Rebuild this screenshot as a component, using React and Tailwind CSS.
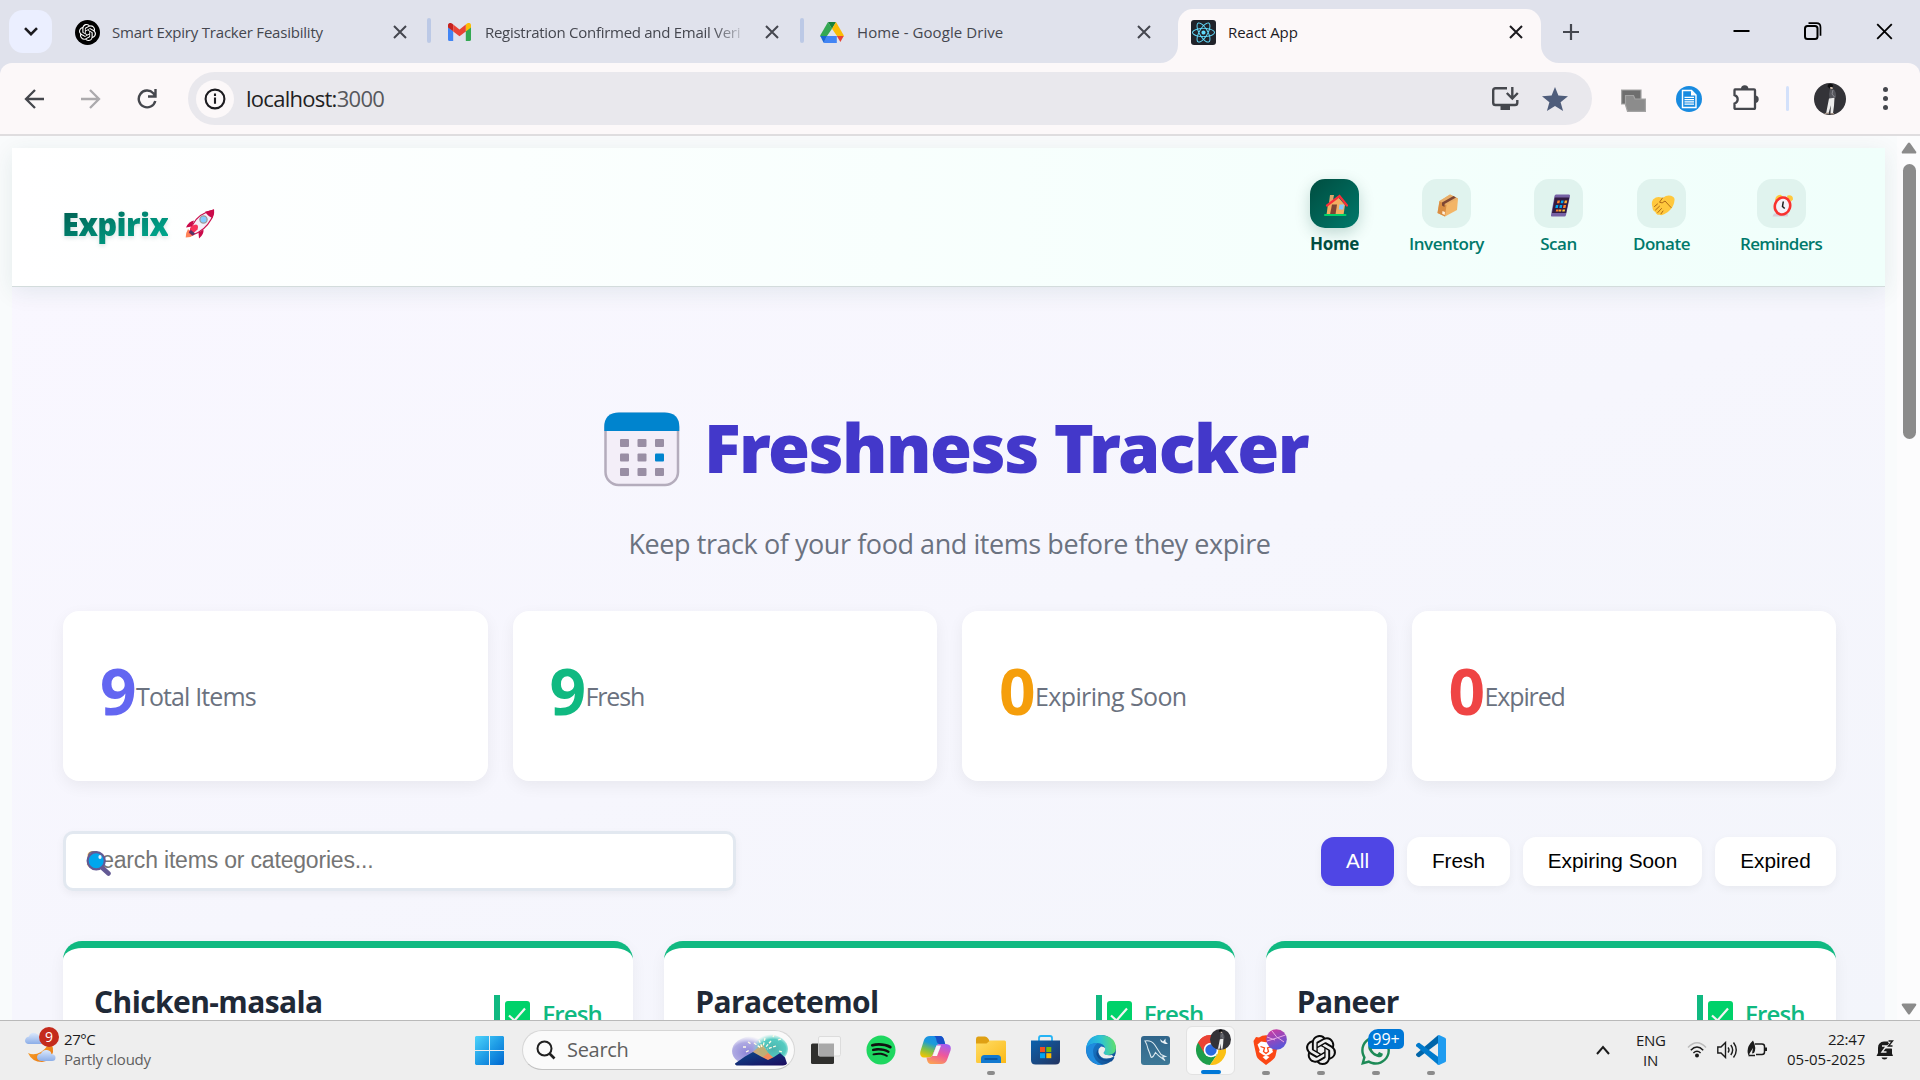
import React from "react";
import { SiOpenai } from "react-icons/si";
import { FaSpotify, FaWhatsapp, FaReact } from "react-icons/fa";

/* ---------- Browser chrome icons ---------- */

const CloseIcon = ({ className = "", size = 14, w = 2 }) => (
  <svg className={className} width={size} height={size} viewBox="0 0 14 14" fill="none" stroke="currentColor" strokeWidth={w}>
    <path d="M1 1l12 12M13 1L1 13" />
  </svg>
);

const GmailIcon = () => (
  <svg width="23" height="18" viewBox="0 0 23 18">
    <path d="M0 2.5V16.5Q0 18 1.6 18H5.2V8.2L0 4z" fill="#4285f4" />
    <path d="M17.8 18h3.6Q23 18 23 16.5V2.5L17.8 8.2z" fill="#34a853" />
    <path d="M0 4.5V2.2C0 0 2.4-.6 4 .5l1.2 1V8.3z" fill="#c5221f" />
    <path d="M17.8 1.5L19 .5c1.7-1.2 4-.4 4 1.7v2.3l-5.2 3.9z" fill="#fbbc04" />
    <path d="M5.2 1.5l6.3 4.9 6.3-4.9v6.9l-6.3 4.9-6.3-4.9z" fill="#ea4335" />
  </svg>
);

const DriveIcon = () => (
  <svg width="24" height="21" viewBox="0 0 24 21">
    <path d="M8 0h8l-4 7z" fill="#188038" />
    <path d="M8 0L.3 13.2Q0 14 .3 14.6L7 14l5-7.300z" fill="#34a853" />
    <path d="M16 0l7.700 13.200q.3.8 0 1.400L17 14l-5-7.300z" fill="#fbbc04" />
    <path d="M7.200 14h9.600v7H4.600q-.9 0-1.400-.8z" fill="#4285f4" />
    <path d="M.3 14h6.900l-3.700 6.600z" fill="#1967d2" />
    <path d="M16.800 14h6.900l-3.300 6z" fill="#ea4335" />
  </svg>
);

const OpenAiCircle = () => (
  <span className="flex size-[25px] items-center justify-center rounded-full bg-black text-white">
    <SiOpenai size={17} />
  </span>
);

const ReactBox = () => (
  <span className="flex size-[25px] items-center justify-center rounded-[3px] bg-[#20232a] text-[#61dafb]">
    <FaReact size={23} />
  </span>
);

const Avatar = ({ size }) => (
  <svg width={size} height={size} viewBox="0 0 32 32">
    <circle cx="16" cy="16" r="16" fill="#333338" />
    <path d="M14 1.500q3-1.500 5 .5l-.5 3-3 .5-2-2z" fill="#0c0c0e" />
    <path d="M16 4l2.500 0 .3 2h-2.300z" fill="#c9b7a8" />
    <path d="M16 6l4 .5q2.500 3 2 8l-6.500 1.500q-1-5 .5-10z" fill="#55565c" />
    <path d="M19 7l-1 4 2.500 3" stroke="#8b8b92" fill="none" />
    <path d="M15 15.500l5.500-.8-.5 8-1 7.500h-2.500l.3-8-2.300 8.500h-2.500z" fill="#ececec" />
    <path d="M11 30l4-.5v1.500l-5 .2zM16.500 30h3.500v1.500h-3.500z" fill="#a08f84" />
  </svg>
);

function Tab({ icon, title, titleClass, className }) {
  return (
    <div className={`flex h-[52px] items-center ${className}`}>
      <span className="flex w-[37px] shrink-0 items-center">{icon}</span>
      <span className={`min-w-0 flex-1 whitespace-nowrap text-[15px] ${titleClass}`}>{title}</span>
    </div>
  );
}

function TabStrip() {
  return (
    <div className="flex h-[63px] w-full items-start bg-[#e0e2ec] text-[#45474f]">
      <div className="ml-[9px] mt-[10px] flex h-[43px] w-[43px] items-center justify-center rounded-[14px] bg-[#ebefff] text-[#1c1b1f]">
        <svg width="14" height="9" viewBox="0 0 14 9" fill="none" stroke="currentColor" strokeWidth="2.600">
          <path d="M1 1.200l6 6 6-6" />
        </svg>
      </div>
      <Tab className="ml-[23px] mt-[6px] w-[318px]" icon={<OpenAiCircle />} title="Smart Expiry Tracker Feasibility" titleClass="tracking-[-0.014em]" />
      <CloseIcon className="mt-[25px]" />
      <div className="ml-[20px] mt-[18px] h-[25px] w-[4px] rounded-full bg-[#bcc9e6]" />
      <Tab
        className="ml-[17px] mt-[6px] w-[298px]"
        icon={<GmailIcon />}
        title="Registration Confirmed and Email Veri"
        titleClass="tracking-[-0.019em] [mask-image:linear-gradient(to_right,black_87%,transparent_101%)]"
      />
      <CloseIcon className="ml-[19px] mt-[25px]" />
      <div className="ml-[21px] mt-[18px] h-[25px] w-[4px] rounded-full bg-[#bcc9e6]" />
      <Tab className="ml-[16px] mt-[6px] w-[317px]" icon={<DriveIcon />} title="Home - Google Drive" titleClass="tracking-[0.005em]" />
      <CloseIcon className="mt-[25px]" />
      <svg className="ml-[9px] mt-[45px] shrink-0" width="18" height="18" viewBox="0 0 18 18">
        <path d="M18 0v18H0A18 18 0 0 0 18 0z" fill="#fcf8f9" />
      </svg>
      <div className="mt-[9px] flex h-[54px] w-[363px] shrink-0 items-start rounded-t-[15px] bg-[#fcf8f9] text-[#1c1b1f]">
        <Tab className="-mt-[3px] ml-[13px] w-[318px]" icon={<ReactBox />} title="React App" titleClass="tracking-[-0.003em]" />
        <CloseIcon className="mt-[16px]" />
      </div>
      <svg className="mt-[45px] shrink-0" width="18" height="18" viewBox="0 0 18 18">
        <path d="M0 0v18h18A18 18 0 0 1 0 0z" fill="#fcf8f9" />
      </svg>
      <svg className="ml-[3px] mt-[23px]" width="18" height="18" viewBox="0 0 18 18" stroke="currentColor" strokeWidth="2.200">
        <path d="M9 1v16M1 9h16" />
      </svg>
      <div className="ml-auto mr-[27px] flex items-center text-black">
        <svg className="mt-[22px]" width="17" height="18" viewBox="0 0 17 18">
          <path d="M.5 9h16" stroke="currentColor" strokeWidth="2" />
        </svg>
        <svg className="ml-[54px] mt-[22px]" width="18" height="18" viewBox="0 0 18 18" fill="none" stroke="currentColor" strokeWidth="2">
          <rect x="1" y="4" width="12.500" height="13" rx="2.500" />
          <path d="M4.500 1.200h8q4 0 4 4v8.500" strokeWidth="1.700" />
        </svg>
        <CloseIcon className="ml-[54px] mt-[22px]" size={17} w={1.500} />
      </div>
    </div>
  );
}

function Toolbar() {
  return (
    <div className="bg-[#e0e2ec]">
      <div className="flex h-[71px] items-center rounded-t-[12px] bg-[#fcf8f9] text-[#45474d]">
        <svg className="ml-[24px]" width="20" height="22" viewBox="0 0 20 22" fill="none" stroke="currentColor" strokeWidth="2.300">
          <path d="M20 11H2M11 2l-9 9 9 9" />
        </svg>
        <svg className="ml-[37px] text-[#acaaad]" width="20" height="22" viewBox="0 0 20 22" fill="none" stroke="currentColor" strokeWidth="2.300">
          <path d="M0 11h18M9 2l9 9-9 9" />
        </svg>
        <svg className="ml-[36px]" width="20" height="22" viewBox="0 0 20 22" fill="none" stroke="currentColor" strokeWidth="2.400">
          <path d="M18.300 13A8.400 8.400 0 1 1 16.300 5.200L18 7.400M18.500 1v7.500H11" />
        </svg>
        <div className="ml-[31px] flex h-[53px] w-[1404px] items-center rounded-full bg-[#e9e8ed]">
          <span className="ml-[8px] flex size-[38px] items-center justify-center rounded-full bg-[#fcf8f9] text-[#1c1b1f]">
            <svg width="22" height="22" viewBox="0 0 22 22" fill="none" stroke="currentColor" strokeWidth="2.100">
              <circle cx="11" cy="11" r="9.400" />
              <path d="M11 9.500v6.300M11 5.600v2.400" />
            </svg>
          </span>
          <span className="ml-[12px] pb-[2px] text-[22px] leading-none tracking-[-0.033em] text-[#1f1f23]">
            localhost:<span className="text-[#56575c]">3000</span>
          </span>
          <svg className="ml-auto" width="27" height="23" viewBox="0 0 27 23" fill="none" stroke="#45474d" strokeWidth="2.400">
            <path d="M15 1.200H3.500Q1.200 1.200 1.200 3.500v12.200q0 2.300 2.300 2.300H23q2.300 0 2.300-2.300V13M20.300 0v11M14.800 6l5.500 5.500L25.800 6" />
            <path d="M8.500 19h9.500v4H8.500z" fill="#45474d" stroke="none" />
          </svg>
          <svg className="ml-[23px] mr-[24px]" width="26" height="24" viewBox="0 0 26 24">
            <path d="M13 0l3.400 8.600 9.600.6-7.400 6 2.500 8.800-8.100-5-8.100 5 2.500-8.800L0 9.200l9.600-.6z" fill="#4f5d7b" />
          </svg>
        </div>
        <svg className="ml-[29px] mt-[3px]" width="25" height="23" viewBox="0 0 25 23" stroke="#a3a3a3" strokeWidth="1.200">
          <path d="M.6 1H20v14H.6z" fill="#6e6e6e" />
          <path d="M4.500 6.500h8l1.500 3.500H24.400v12.400H6.500L4.500 16z" fill="#8c8c8c" />
        </svg>
        <svg className="ml-[30px] mt-px" width="26" height="26" viewBox="0 0 26 26">
          <circle cx="13" cy="13" r="13" fill="#188be0" />
          <path d="M6.500 4.500h9l4.500 4.500v12.500H6.500z" fill="#188be0" stroke="#fff" strokeWidth="1.400" />
          <path d="M15 4.500V9.500h5z" fill="#fff" />
          <path d="M8.500 11.300h9.500M8.500 13.600h9.500M8.500 15.900h9.500M8.500 18.200h9.500" stroke="#fff" strokeWidth="1.300" />
        </svg>
        <svg className="-mt-[4px] ml-[31px]" width="26" height="26" viewBox="0 0 26 26">
          <path d="M2 5.300h19q1 0 1 1V24q0 1-1 1H2.500q-1 0-1-1v-4.500q3.200-1 3.200-4.200t-3.200-4.200V6.300q0-1 .5-1z" fill="none" stroke="#45474d" strokeWidth="2.300" />
          <path d="M8 5a3.700 3.700 0 0 1 7.400 0zM22 11.500a3.700 3.700 0 0 1 0 7.400z" fill="#45474d" />
        </svg>
        <div className="ml-[27px] h-[25px] w-[3px] rounded-full bg-[#d3e1fb]" />
        <span className="ml-[25px]">
          <Avatar size={32} />
        </span>
        <span className="ml-[37px] flex flex-col gap-[4px]">
          <i className="size-[5px] rounded-full bg-[#45474d]" />
          <i className="size-[5px] rounded-full bg-[#45474d]" />
          <i className="size-[5px] rounded-full bg-[#45474d]" />
        </span>
      </div>
      <div className="h-[2px] bg-[#dfdddf]" />
    </div>
  );
}

/* ---------- App pictograms ---------- */

const Rocket = () => (
  <svg width="30" height="30" viewBox="0 0 30 30">
    <path d="M3 20q-2.500 4-2.300 8.500Q6 28.500 8.500 26z" fill="#ff8257" />
    <path d="M9 11.500q-5 .5-8 7l6-1zM18.500 20.500q.5 5-4.500 9l-.5-6z" fill="#ca0b4a" />
    <path d="M4.500 23.500Q9 8 21 3.500l7.500-2.500q.5 5-2.500 9.500Q20 21.500 7.500 26z" fill="#f4eef8" stroke="#ca0b4a" strokeWidth="1.200" />
    <path d="M20 2.800l9-2.300q.3 4.500-1.700 8.300-4-1-7.300-6z" fill="#ca0b4a" />
    <circle cx="18.500" cy="10.500" r="3.600" fill="#83cbff" stroke="#9b9b9b" strokeWidth="1.300" />
    <path d="M5 20q1-4 6-4.500 3 .5 1.500 5L8 24.500z" fill="#f8315a" />
    <path d="M4 23.500l4 3 2-2-4-3.500z" fill="#533566" />
  </svg>
);

const House = () => (
  <svg width="24" height="23" viewBox="0 0 24 23">
    <path d="M6 1h4l-1.500 8H5z" fill="#dea66c" />
    <path d="M4 10l10-7 7 8-1.500 10H2.500z" fill="#f3ad61" />
    <path d="M8 10.500h5l-1.500 10H6z" fill="#7d4533" />
    <path d="M15.500 10.500h4.500l-.8 5h-4.500z" fill="#83cbff" />
    <path d="M3 11.500L15.500 2 23 11.500" fill="none" stroke="#f92f3a" strokeWidth="2.200" strokeLinecap="round" />
    <path d="M1 21h20.500" stroke="#00d26a" strokeWidth="2" strokeLinecap="round" />
  </svg>
);

const Parcel = () => (
  <svg width="22" height="23" viewBox="0 0 22 23">
    <path d="M2.500 7L13 .5 21 4.500 20 16 8 22.500.5 19z" fill="#f3b567" />
    <path d="M2.500 7L9.500 11 8 22.500.5 19z" fill="#d98d43" />
    <path d="M2.500 7L13 .5 21 4.500 9.500 11z" fill="#e8ad68" />
    <path d="M5 8.500L16.500 2l2.500 1.500L7.500 10v3L5 11.500z" fill="#7d4533" />
    <path d="M5.500 17l2.500 1-.3 3-2.500-1.300z" fill="#fff0dc" />
  </svg>
);

const Phone = () => (
  <svg width="21" height="23" viewBox="0 0 21 23">
    <path d="M6 .5h13q1.300 0 1 1.500l-4 19q-.4 1.500-1.600 1.500H2Q.6 22.500 1 21L4.500 2Q4.800.500 6 .500z" fill="#7661a5" />
    <path d="M4.800 3.500h14.500l-3.200 15.500H2z" fill="#321b41" />
    <path d="M7.500 6.500H10l-.6 2.800H6.900zM6.200 15.500h2.500l-.4 2H5.700z" fill="#ff822d" />
    <path d="M11.200 6.500h2.500l-.6 2.800h-2.500zM9.800 11h2.500l-.5 3H9.300zM5.900 11h2.500l-.6 3H5.300z" fill="#00a6ed" />
    <path d="M14.800 6.500h2.500l-.6 2.800h-2.500zM9 15.500h2.500l-.4 2H8.600z" fill="#ffb02e" />
    <path d="M13.600 11h2.500l-.6 3h-2.500z" fill="#ff822d" />
    <path d="M12.600 15.500h2.500l-.4 2h-2.500z" fill="#ffc83d" />
  </svg>
);

const Handshake = () => (
  <svg width="24" height="21" viewBox="0 0 24 21">
    <path d="M2 4.500Q5.500 1.500 9 2.200l3 .6Q16 -.5 20 .8q4 1.200 3.500 4.500Q23 11 19.500 14.500 16.500 18 13.500 19q-2.500 1.800-5 .8Q5 20 4.500 17 1.200 15.500 1.500 12 0 8 2 4.500z" fill="#ffc83d" />
    <path d="M11.500 3L8.500 7.200q2.500 2 5.500-1.200l6 6.500M3.500 11.500l3-2.500M4.500 15l4-3.800M6.800 17.500l3.700-4M10 18.800l2-2.800" fill="none" stroke="#b06a16" strokeWidth="1" strokeLinecap="round" />
  </svg>
);

const AlarmClock = () => (
  <svg width="24" height="23" viewBox="0 0 24 23">
    <path d="M3 19.500h14.500l-1 3H1.500z" fill="#d5d0d9" />
    <path d="M4 6Q5 1 9.500.8L12 2.500 6 7.500zM16.500 1.500q5.500-1 5.500 4L20 7.500 16 3z" fill="#ffc83d" />
    <ellipse cx="11.500" cy="12" rx="7.600" ry="8.600" fill="#f4f0f8" stroke="#f8312f" strokeWidth="2.600" transform="rotate(18 11.500 12)" />
    <path d="M12.300 7.500l-.8 5 2.200 2" fill="none" stroke="#1c1c1c" strokeWidth="1.500" />
  </svg>
);

const Calendar = () => (
  <svg width="76" height="75" viewBox="0 0 76 75">
    <rect x="1.500" y="2" width="72.500" height="71" rx="13" fill="#f3eef8" stroke="#b4acbc" strokeWidth="2.500" />
    <path d="M.3 19V15Q.3.500 15 .500h45.500Q75.300.500 75.300 15v4z" fill="#0084ce" />
    <g fill="#998ea4">
      <rect x="16" y="27" width="9" height="8" rx="1" />
      <rect x="33.500" y="27" width="9" height="8" rx="1" />
      <rect x="51" y="27" width="9" height="8" rx="1" />
      <rect x="16" y="41.500" width="9" height="8" rx="1" />
      <rect x="33.500" y="41.500" width="9" height="8" rx="1" />
      <rect x="16" y="56" width="9" height="8" rx="1" />
      <rect x="33.500" y="56" width="9" height="8" rx="1" />
      <rect x="51" y="56" width="9" height="8" rx="1" />
    </g>
    <rect x="51" y="41.500" width="9" height="8" rx="1" fill="#0084ce" />
  </svg>
);

const Magnifier = () => (
  <svg width="26" height="25" viewBox="0 0 26 25">
    <path d="M16.500 17l6 5.500" stroke="#635994" strokeWidth="4.500" strokeLinecap="round" />
    <circle cx="10.200" cy="9.800" r="8.600" fill="#00a6ed" stroke="#635994" strokeWidth="2.200" />
    <ellipse cx="14" cy="6" rx="1.600" ry="2" fill="#e8f6ff" />
  </svg>
);

/* ---------- App page ---------- */

const nav = [
  { label: "Home", icon: <House />, active: true, w: "w-[49px]", t: "tracking-[-0.02em]" },
  { label: "Inventory", icon: <Parcel />, w: "w-[75px]", t: "tracking-[-0.029em]" },
  { label: "Scan", icon: <Phone />, w: "w-[49px]", t: "tracking-[-0.03em]" },
  { label: "Donate", icon: <Handshake />, w: "w-[57px]", t: "tracking-[-0.03em]" },
  { label: "Reminders", icon: <AlarmClock />, w: "w-[82px]", t: "tracking-[-0.042em]" },
];

function AppHeader() {
  return (
    <header className="relative mr-[12px] flex h-[139px] items-start justify-between border-b border-[#d3dcdc] bg-gradient-to-r from-white to-[#f0fffb] shadow-[0_5px_22px_rgba(0,77,64,0.09)]">
      <div className="ml-[50px] mt-[54px] flex items-center">
        <span className="bg-gradient-to-br from-[#00594c] to-[#00b397] bg-clip-text font-['Noto_Sans'] text-[31px] font-black leading-[44px] tracking-[-0.02em] text-transparent drop-shadow-[0_2px_2px_rgba(0,77,64,0.15)]">
          Expirix
        </span>
        <span className="ml-[17px]">
          <Rocket />
        </span>
      </div>
      <nav className="mr-[63px] mt-[31px] flex gap-[50px]">
        {nav.map((n) => (
          <div key={n.label} className={`flex flex-col items-center ${n.w}`}>
            <span
              className={
                n.active
                  ? "flex size-[49px] items-center justify-center rounded-[15px] bg-gradient-to-br from-[#004d40] to-[#00796b] pl-[3px] pt-[3px] shadow-[0_5px_15px_rgba(0,77,64,0.22)]"
                  : "flex size-[49px] items-center justify-center rounded-[15px] bg-[#e0f3ee] pl-[3px] pt-[3px]"
              }
            >
              {n.icon}
            </span>
            <span
              className={`mt-[4px] whitespace-nowrap text-[17px] leading-[24px] ${n.t} ${
                n.active ? "font-bold text-[#004d40]" : "font-semibold text-[#00796b]"
              }`}
            >
              {n.label}
            </span>
          </div>
        ))}
      </nav>
    </header>
  );
}

const stats = [
  { n: 9, label: "Total Items", color: "text-[#6366f1]", t: "tracking-[-0.035em]" },
  { n: 9, label: "Fresh", color: "text-[#10b981]", t: "tracking-[-0.045em]" },
  { n: 0, label: "Expiring Soon", color: "text-[#f59e0b]", t: "tracking-[-0.025em]" },
  { n: 0, label: "Expired", color: "text-[#ef4444]", t: "tracking-[-0.045em]" },
];

const filters = [
  { label: "All", w: "w-[73px]" },
  { label: "Fresh", w: "w-[103px]" },
  { label: "Expiring Soon", w: "w-[179px]" },
  { label: "Expired", w: "w-[121px]" },
];

const items = ["Chicken-masala", "Paracetemol", "Paneer"];

function Page() {
  return (
    <div className="flex h-[884px] overflow-hidden bg-[#f9fbfc] pl-[12px]">
      <div className="w-[1885px] shrink-0 pt-[12px]">
        <AppHeader />
        <main className="mr-[12px] h-[740px] bg-gradient-to-br from-[#f9f7ff] via-[#f6f6fd] to-[#f3f5fb] pl-[51px] pr-[49px]">
          <div className="flex justify-center pt-[125px]">
            <span className="ml-[13px] mr-[24px] shrink-0">
              <Calendar />
            </span>
            <h1 className="-mt-[13px] whitespace-nowrap font-['Noto_Sans'] text-[68px] font-black leading-[96px] tracking-[-0.023em] text-[#4338ca]">
              Freshness Tracker
            </h1>
          </div>
          <p className="mt-[30px] whitespace-nowrap text-center text-[27px] leading-[38px] tracking-[-0.016em] text-[#6b7280]">
            Keep track of your food and items before they expire
          </p>
          <div className="mt-[48px] grid grid-cols-4 gap-[25px]">
            {stats.map((s) => (
              <div key={s.label} className="flex h-[170px] items-start rounded-[16px] bg-white pl-[37px] pt-[32px] shadow-[0_5px_16px_rgba(0,0,0,0.06)]">
                <span className={`w-[36px] text-[64px] font-bold leading-[96px] tracking-[-0.04em] ${s.color}`}>{s.n}</span>
                <span className={`mt-[36px] whitespace-nowrap text-[25px] leading-[34px] text-[#6b7280] ${s.t}`}>{s.label}</span>
              </div>
            ))}
          </div>
          <div className="mt-[50px] flex items-center justify-between">
            <div className="relative flex h-[60px] w-[673px] items-center rounded-[10px] border-[3px] border-[#e2e8f0] bg-white pl-[20px] font-['Liberation_Sans'] text-[23px] text-[#757575] shadow-[0_3px_8px_rgba(0,0,0,0.05)]">
              <span className="whitespace-nowrap pb-px tracking-[-0.008em]">Search items or categories...</span>
              <span className="absolute left-[20px] top-[17px]">
                <Magnifier />
              </span>
            </div>
            <div className="flex gap-[13px] font-['Liberation_Sans'] text-[20.8px]">
              {filters.map((f, i) => (
                <span
                  key={f.label}
                  className={`flex h-[49px] items-center justify-center whitespace-nowrap rounded-[13px] shadow-[0_3px_8px_rgba(0,0,0,0.05)] ${f.w} ${
                    i === 0 ? "bg-[#4f46e5] text-white" : "bg-white text-black"
                  }`}
                >
                  {f.label}
                </span>
              ))}
            </div>
          </div>
          <div className="mt-[50px] grid grid-cols-3 gap-[31px]">
            {items.map((t) => (
              <div key={t} className="flex h-[260px] items-start justify-between rounded-[19px] border-t-[7px] border-[#10b981] bg-white pl-[31px] pr-[31px] shadow-[0_5px_16px_rgba(0,0,0,0.05)]">
                <h2 className="mt-[33px] whitespace-nowrap text-[30px] font-bold leading-[42px] tracking-[-0.02em] text-[#1f2937]">{t}</h2>
                <span className="mt-[47px] flex h-[54px] w-[108px] items-start border-l-[6px] border-[#10b981] pl-[5px] text-[24px] font-semibold leading-[38px] tracking-[-0.035em] text-[#10b981]">
                  <svg className="mt-[6px] shrink-0" width="25" height="25" viewBox="0 0 25 25">
                    <rect width="25" height="25" rx="3" fill="#00d26a" />
                    <path d="M4 14.500l5.500 5L20 7.500" fill="none" stroke="#f3f3f3" strokeWidth="2.200" />
                  </svg>
                  <span className="ml-[12px]">Fresh</span>
                </span>
              </div>
            ))}
          </div>
        </main>
      </div>
      <div className="flex w-[23px] flex-col items-center bg-[#fcfcfd] pl-px pt-[6px]">
        <svg width="16" height="12" viewBox="0 0 16 12">
          <path d="M7 1q1-1 2 0l6 8.500q1 2-1 2H2q-2 0-1-2z" fill="#8b8b8b" />
        </svg>
        <div className="mt-[10px] h-[275px] w-[13px] rounded-full bg-[#8b8b8b]" />
        <svg className="mt-[564px]" width="16" height="12" viewBox="0 0 16 12">
          <path d="M7 11q1 1 2 0l6-8.500q1-2-1-2H2q-2 0-1 2z" fill="#8b8b8b" />
        </svg>
      </div>
    </div>
  );
}

/* ---------- Taskbar ---------- */

const Weather = () => (
  <svg width="32" height="36" viewBox="0 0 32 36">
    <defs>
      <linearGradient id="cl" x1="0" y1="0" x2="0" y2="1">
        <stop offset="0" stopColor="#dbe8fb" />
        <stop offset="1" stopColor="#8caee8" />
      </linearGradient>
      <linearGradient id="mn" x1="0" y1="0" x2="1" y2="1">
        <stop offset="0" stopColor="#f9ab35" />
        <stop offset="1" stopColor="#e8710a" />
      </linearGradient>
    </defs>
    <path d="M3 24q6 3 13-1 8-5 6-11 7 3 6 11-2 9-11 10Q7 33 3 24z" fill="url(#mn)" />
    <path d="M3 15q-3-1-3-3.500Q.5 8 4 7.500 5.500 3 10 4q4 1 4.500 4.500L17 15z" fill="url(#cl)" />
    <path d="M16 32q-4-.5-4-4 .5-3.500 4-3.500 1.500-4 6-3.500 4 .5 4.500 4 4 .5 4 3.700T27 32z" fill="url(#cl)" />
  </svg>
);

const Windows = () => (
  <svg width="29" height="29" viewBox="0 0 29 29">
    <defs>
      <linearGradient id="wn" x1="0" y1="0" x2="1" y2="1">
        <stop offset="0" stopColor="#4ed4fb" />
        <stop offset=".5" stopColor="#1f9de6" />
        <stop offset="1" stopColor="#0067d0" />
      </linearGradient>
    </defs>
    <path d="M1 0h13v14H0V1zM15 0h13l1 1v13H15zM0 15h14v14H1l-1-1zM15 15h14v13l-1 1H15z" fill="url(#wn)" />
  </svg>
);

const Fireworks = () => (
  <svg width="56" height="32" viewBox="0 0 56 32">
    <defs>
      <radialGradient id="fa" cx=".35" cy=".55" r=".55">
        <stop offset="0" stopColor="#8d86d8" />
        <stop offset=".6" stopColor="#9b95dc" stopOpacity=".8" />
        <stop offset="1" stopColor="#b9b3ec" stopOpacity="0" />
      </radialGradient>
      <radialGradient id="fb" cx=".62" cy=".5" r=".5">
        <stop offset="0" stopColor="#4cb2ac" />
        <stop offset=".65" stopColor="#43c6bb" stopOpacity=".9" />
        <stop offset="1" stopColor="#7fe0d4" stopOpacity="0" />
      </radialGradient>
      <linearGradient id="fc" x1="0" y1="0" x2="1" y2="1">
        <stop offset="0" stopColor="#0b4a8b" />
        <stop offset="1" stopColor="#1c0b5e" />
      </linearGradient>
    </defs>
    <ellipse cx="21" cy="17" rx="21" ry="15" fill="url(#fa)" />
    <ellipse cx="36" cy="15" rx="20" ry="15" fill="url(#fb)" />
    <path d="M14 24l16-14 10 14-5 3z" fill="#d9a964" opacity=".8" />
    <path d="M30 24l6-5 6 5-5 3z" fill="#f58a5a" />
    <path d="M3 29.500l10-7 8-4.500 8 4.500 7 3.500 6-3 6-4 5 4.500 2 6q-1 2-4 2H6q-3 0-3-2z" fill="url(#fc)" />
    <path d="M27 6l3 7M33 4l-2 9M39 7l-6 7M22 9l7 5M44 12l-9 3M16 8l3 2M11 13h3M14 18l4-2M46 6l3-1M47 17l3 1M41 3l1-2" stroke="#fffbe6" strokeWidth="1.300" strokeDasharray="3 1.500" />
  </svg>
);

const TaskView = () => (
  <svg width="30" height="28" viewBox="0 0 30 28">
    <rect x="0" y="7.500" width="23" height="20.500" rx="1.500" fill="#2f2f2d" />
    <rect x="7.500" y=".5" width="22" height="19.500" rx="1.500" fill="#f6f6f6" stroke="#dcdcdc" />
    <path d="M7.500 7.500H23V20H8.500q-1 0-1-1z" fill="#a9a9a9" />
  </svg>
);

const Copilot = () => (
  <svg width="31" height="28" viewBox="0 0 31 28">
    <defs>
      <linearGradient id="ca" x1=".6" y1="0" x2=".2" y2="1">
        <stop offset="0" stopColor="#1a8fe8" />
        <stop offset=".35" stopColor="#1b9bd8" />
        <stop offset=".65" stopColor="#7cc04b" />
        <stop offset="1" stopColor="#f5c400" />
      </linearGradient>
      <linearGradient id="cb" x1=".7" y1="0" x2=".3" y2="1">
        <stop offset="0" stopColor="#a55cf0" />
        <stop offset=".5" stopColor="#f0589a" />
        <stop offset="1" stopColor="#fba055" />
      </linearGradient>
    </defs>
    <path d="M10 0h10q3 0 4 4l1.200 4h-5.500q-3 0-4 3.500L13 18q-1 3.500-4 3.500H4Q-1 21 .5 15L4 4Q5.500 0 10 0z" fill="url(#ca)" />
    <path d="M14 0h6q3 0 4 4l1.200 4H20q-3 0-3.500-3.500Q16 .5 14 0z" fill="#1850c8" />
    <path d="M21 28H11q-3 0-4-4l-.5-2.500H9q3 0 4-3.500l2.700-6.500Q16.700 8 19.700 8H26q6 .5 4.500 6.500L27 24q-1.500 4-6 4z" fill="url(#cb)" />
    <path d="M16.500 9.500h4.500L17 20h-4.500z" fill="#f7f7f7" />
  </svg>
);

const Folder = () => (
  <svg width="30" height="28" viewBox="0 0 30 28">
    <defs>
      <linearGradient id="fo" x1="0" y1="0" x2="1" y2="1">
        <stop offset="0" stopColor="#ffdd66" />
        <stop offset="1" stopColor="#fbb917" />
      </linearGradient>
    </defs>
    <path d="M0 3q0-2.500 2-2.500h7q2 0 3.500 2.500l1 2H28v6H0z" fill="#dfa013" />
    <path d="M0 7.500h10.500L14 4.500h14.500q1.500 0 1.500 1.500v21H1.500Q0 27 0 25.500z" fill="url(#fo)" />
    <path d="M5 27v-4.500q0-3.500 3.500-3.500h13q3.500 0 3.500 3.500V27z" fill="#1279cf" />
    <path d="M8.500 23h13" stroke="#0a4e94" strokeWidth="1.500" />
  </svg>
);

const Store = () => (
  <svg width="29" height="30" viewBox="0 0 29 30">
    <defs>
      <linearGradient id="st" x1="0" y1="0" x2="1" y2="1">
        <stop offset="0" stopColor="#0c62ae" />
        <stop offset="1" stopColor="#233460" />
      </linearGradient>
    </defs>
    <path d="M8 7V3q0-2 2-2h9q2 0 2 2v4" fill="none" stroke="#25b4f5" strokeWidth="1.800" />
    <path d="M0 5.500h29V25q0 4.500-4.500 4.500h-20Q0 29.500 0 25z" fill="url(#st)" />
    <path d="M9 12h5v5H9z" fill="#f25022" />
    <path d="M15.300 12h5v5h-5z" fill="#7fba00" />
    <path d="M9 18.200h5v5H9z" fill="#00a4ef" />
    <path d="M15.300 18.200h5v5h-5z" fill="#ffb900" />
  </svg>
);

const Edge = () => (
  <svg width="30" height="30" viewBox="0 0 30 30">
    <defs>
      <linearGradient id="ea" x1="0" y1=".5" x2="1" y2=".4">
        <stop offset="0" stopColor="#1f9fe8" />
        <stop offset=".5" stopColor="#2cc3d4" />
        <stop offset="1" stopColor="#62e06a" />
      </linearGradient>
      <linearGradient id="eb" x1="0" y1="0" x2="1" y2="1">
        <stop offset="0" stopColor="#1887de" />
        <stop offset="1" stopColor="#114a8b" />
      </linearGradient>
    </defs>
    <circle cx="15" cy="15" r="15" fill="url(#eb)" />
    <path d="M0 14Q1.500 0 15 0q14 1 15 12.500 0 7-7.500 7.500-4.500 0-5-2 2-2 1.500-5-1-4.500-7.500-5Q3 8 0 14z" fill="url(#ea)" />
    <path d="M0 14Q3 8 11.500 8q-4 3-4.500 8Q7 26 17 30q-3 .3-6-.6Q1 26 0 14z" fill="#1f8bde" />
    <path d="M12.500 14q-2 8 6 10.500 5 1 10-2-1 2-3 4Q13 27 10.500 20q-.5-4 2-6z" fill="#0f4c92" />
    <path d="M17.500 18q2-2 1.500-5-1-1.500-4-1.500-3 2-2.500 6 1.500 6 8 6 4 0 8.500-2.500l1-1.500q0-1 1 0V30l-1-7.500q-3-.5-4-2.500-7 1-8.500-2z" fill="#ededed" />
  </svg>
);

const MySql = () => (
  <svg width="29" height="29" viewBox="0 0 29 29">
    <defs>
      <linearGradient id="my" x1="0" y1="0" x2="0" y2="1">
        <stop offset="0" stopColor="#30658a" />
        <stop offset="1" stopColor="#3d7897" />
      </linearGradient>
    </defs>
    <rect width="29" height="29" rx="3" fill="url(#my)" />
    <path d="M4 5q6-1 9.500 3.500Q17 14 20 18.500l4.500 2-3 .5 2.500 3.500-4-3q-3-2-5.500-5l-2 3.500q-2 2-2.500 1-1-3.500-3-8Q6 8 4 5z" fill="none" stroke="#dbe8ef" strokeWidth="1.100" />
    <path d="M19 3l3 2.500 2.500-3v3L27 8h-3l-4-2z" fill="#e6eef3" />
  </svg>
);

const Chrome = () => (
  <svg width="30" height="30" viewBox="0 0 30 30">
    <path d="M15 15L2 7.500A15 15 0 0 1 28 7.500z" fill="#ea4335" />
    <path d="M15 15L2 7.500A15 15 0 0 0 14 30l7.500-11z" fill="#1e9e4a" />
    <path d="M15 15L28 7.500A15 15 0 0 1 14 30l7.500-11V8z" fill="#fbc116" />
    <path d="M15 7.500H28A15 15 0 0 0 2 7.500L8.500 18.500z" fill="#ea4335" />
    <circle cx="15" cy="15" r="7.300" fill="#fff" />
    <circle cx="15" cy="15" r="5.700" fill="#2c6be0" />
  </svg>
);

const Brave = () => (
  <svg width="26" height="30" viewBox="0 0 26 30">
    <path d="M6 2.500Q9 .3 13 .3t7 2.200l3-.5L25.500 6 25 9.500 22.500 21q-.7 2.500-3 4L13 30l-6.500-5q-2.300-1.500-3-4L1 9.500.5 6 3 2z" fill="#fb4715" />
    <path d="M4.500 9.500L8 6.500l5 .8 5-.8 3.500 3-2.200 5.500.7 2-4 2.700-3 1.300-3-1.300L6 17l.7-2z" fill="#fff" />
    <path d="M7.500 11.500l4 1.500-1 3.500 2.500 2 2.500-2-1-3.500 4-1.500" fill="none" stroke="#fb4715" strokeWidth="1.300" />
    <path d="M9.500 22l3.500-1.500 3.500 1.500-3.500 3z" fill="#fff" />
  </svg>
);

const VsCode = () => (
  <svg width="30" height="30" viewBox="0 0 30 30">
    <path d="M22 .3v8L3.200 22.200 1.800 22 0 20.200q-.4-.7.3-1.400z" fill="#0065a9" />
    <path d="M22 29.700v-8L3.200 7.800 1.800 8 0 9.800q-.4.700.3 1.400z" fill="#007acc" />
    <path d="M22 .2q.8-.4 1.600 0L29 2.800q1 .5 1 1.500v21.400q0 1-1 1.500l-5.400 2.600q-.8.400-1.600 0-1-.4 0-1.600z" fill="#1f9cf0" />
  </svg>
);

const apps = [
  { id: "view", icon: <TaskView /> },
  { id: "spotify", icon: <span className="flex size-[30px] items-center justify-center rounded-full bg-[radial-gradient(circle,#111_60%,transparent_61%)]"><FaSpotify size={30} color="#1ed760" /></span> },
  { id: "copilot", icon: <Copilot /> },
  { id: "files", icon: <Folder />, dot: true },
  { id: "store", icon: <Store /> },
  { id: "edge", icon: <Edge /> },
  { id: "mysql", icon: <MySql /> },
  {
    id: "chrome",
    icon: <Chrome />,
    active: true,
    over: <span className="absolute left-[23px] top-[2px]"><Avatar size={21} /></span>,
  },
  {
    id: "brave",
    icon: <Brave />,
    dot: true,
    over: (
      <svg className="absolute left-[25px] top-[3px]" width="21" height="21" viewBox="0 0 21 21">
        <defs>
          <linearGradient id="bv" x1="0" y1="0" x2=".4" y2="1">
            <stop offset="0" stopColor="#d8399b" />
            <stop offset="1" stopColor="#5b55d8" />
          </linearGradient>
        </defs>
        <circle cx="10.500" cy="10.500" r="10.300" fill="url(#bv)" />
        <path d="M1 12Q11 9 19.500 6M6 2q3 6 12 11M1 8l8 3" stroke="#e9a9e4" fill="none" />
      </svg>
    ),
  },
  { id: "gpt", icon: <SiOpenai size={30} color="#0b0b0b" />, dot: true },
  {
    id: "whatsapp",
    icon: <FaWhatsapp size={33} color="#1d8a56" />,
    dot: true,
    over: (
      <span className="absolute left-[17px] top-[3px] flex h-[20px] w-[36px] items-center justify-center rounded-[5px] rounded-tl-[10px] bg-[#0078d7] text-[16px] leading-none text-white">
        99+
      </span>
    ),
  },
  { id: "code", icon: <VsCode />, dot: true },
];

function Taskbar() {
  return (
    <div className="flex h-[60px] items-start border-t border-[#b9b9b9] bg-[#eeeeee] text-[#1b1b1b]">
      <div className="relative ml-[25px] mt-[8px] w-[39px]">
        <Weather />
        <span className="absolute left-[14px] -top-[2px] flex size-[20px] items-center justify-center rounded-full bg-[#c42b1c] text-[14px] leading-none text-white">9</span>
      </div>
      <div className="mt-[8px] w-[411px] whitespace-nowrap text-[15px] leading-[20px]">
        <div className="tracking-[-0.03em]">27°C</div>
        <div className="tracking-[-0.016em] text-[#5f5f5f]">Partly cloudy</div>
      </div>
      <span className="mt-[15px]">
        <Windows />
      </span>
      <div className="ml-[18px] mt-[9px] flex h-[40px] w-[273px] items-center rounded-full border border-[#d6d6d6] border-b-[#c2c2c2] bg-[#fafafa]">
        <svg className="ml-[13px]" width="20" height="20" viewBox="0 0 20 20" fill="none" stroke="#1f1f1f" strokeWidth="2">
          <circle cx="8.500" cy="8.500" r="7" />
          <path d="M13.500 13.500l5 5" strokeWidth="2.600" />
        </svg>
        <span className="ml-[11px] text-[20px] leading-none tracking-[-0.015em] text-[#5f5f5f]">Search</span>
        <span className="ml-auto mr-[6px]">
          <Fireworks />
        </span>
      </div>
      <div className="ml-[3px] mt-[5px] flex">
        {apps.map((a) => (
          <div key={a.id} className="flex w-[55px] justify-center">
            <div className={`relative flex h-[49px] w-[49px] items-center justify-center pb-px ${a.active ? "rounded-[6px] border border-[#e2e2e2] bg-[#f9f9f9]" : ""}`}>
              {a.icon}
              {a.over}
              {a.active && <i className="absolute bottom-0 left-[14px] h-[4px] w-[20px] rounded-full bg-[#0078d7]" />}
              {a.dot && <i className="absolute bottom-0 left-[21px] h-[4px] w-[8px] rounded-full bg-[#8b8b8b]" />}
            </div>
          </div>
        ))}
      </div>
      <div className="ml-auto mr-[26px] flex items-start text-[15px]">
        <svg className="mt-[24px]" width="14" height="10" viewBox="0 0 14 10" fill="none" stroke="currentColor" strokeWidth="2">
          <path d="M1 9l6-7 6 7" />
        </svg>
        <div className="ml-[26px] mt-[9px] w-[29px] text-center leading-[20px] tracking-[-0.02em]">
          <div>ENG</div>
          <div>IN</div>
        </div>
        <svg className="ml-[22px] mt-[20px]" width="20" height="17" viewBox="0 0 20 17" fill="none" strokeWidth="1.500">
          <path d="M1 6.500q9-9.500 18 0" stroke="#bcbcbc" />
          <path d="M3.800 9.300q6.200-6.400 12.400 0M6.400 12q3.600-3.400 7.200 0" stroke="currentColor" />
          <circle cx="10" cy="14.500" r="2" fill="currentColor" />
        </svg>
        <svg className="ml-[10px] mt-[20px]" width="21" height="18" viewBox="0 0 21 18" fill="none" stroke="currentColor" strokeWidth="1.400">
          <path d="M.8 6v6H4l4.500 4.500v-15L4 6z" />
          <path d="M11 6.500q2 2.500 0 5M13.800 4q3.700 5 0 10M16.500 1.500q5.500 7.500 0 15" />
        </svg>
        <svg className="ml-[9px] mt-[19px]" width="20" height="18" viewBox="0 0 20 18">
          <path d="M8 4h7q2.500 0 2.500 2.500V12q0 2.500-2.500 2.500H9" fill="none" stroke="#1b1b1b" strokeWidth="1.500" />
          <path d="M18 7.500h2v3.500h-2z" fill="#1b1b1b" />
          <path d="M1 14Q-1 7 6 .5q4 7 1 12.500l-2 .5L6 8l-3.500 5.500L2 17z" fill="#1b1b1b" />
          <path d="M2 15.500h6" stroke="#1b1b1b" strokeWidth="1.500" />
        </svg>
        <div className="ml-[20px] mt-[8px] w-[78px] whitespace-nowrap text-right leading-[20px]">
          <div className="tracking-[-0.015em]">22:47</div>
          <div>05-05-2025</div>
        </div>
        <svg className="ml-[11px] mt-[19px]" width="18" height="20" viewBox="0 0 18 20">
          <path d="M2 13V8Q2 2 8 1.500h4L16 9v4.500l1 2.500H.5z" fill="#1b1b1b" />
          <path d="M5.500 17.500h6q-.5 2-3 2t-3-2z" fill="#1b1b1b" />
          <path d="M6 6h4.500L6 12h4.500" fill="none" stroke="#eee" strokeWidth="1.400" />
          <path d="M12 1h5l-5 6h5" fill="none" stroke="#eee" strokeWidth="3" />
          <path d="M12.500 1h4l-4 5h4" fill="none" stroke="#1b1b1b" strokeWidth="1.400" />
        </svg>
      </div>
    </div>
  );
}

export default function App() {
  return (
    <div className="h-[1080px] w-[1920px] overflow-hidden font-['Open_Sans',sans-serif]">
      <TabStrip />
      <Toolbar />
      <Page />
      <Taskbar />
    </div>
  );
}
